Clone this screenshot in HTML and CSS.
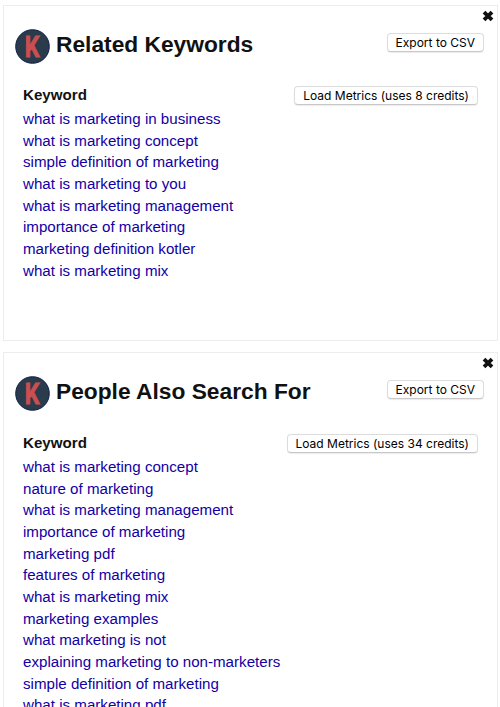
FILE: index.html
```html
<!DOCTYPE html>
<html lang="en">
<head>
  <meta charset="UTF-8">
  <title>Related Keywords</title>
  <link rel="stylesheet" href="styles.css">
</head>
<body>

  <section class="panel" id="related">
    <button class="close" title="Close">
      <svg width="12" height="12" viewBox="0 0 12 12"><path d="M2 2.2L10 9.8M10 2.2L2 9.8"/></svg>
    </button>
    <header class="panel-header">
      <svg class="logo" viewBox="0 0 35 35">
        <circle cx="17.5" cy="17.5" r="16.8"/>
        <text transform="translate(17 27.8) scale(0.8 1)">K</text>
      </svg>
      <h2>Related Keywords</h2>
      <button class="btn">Export to CSV</button>
    </header>
    <div class="list-header">
      <h3>Keyword</h3>
      <button class="btn">Load Metrics (uses 8 credits)</button>
    </div>
    <ul>
      <li><a href="#">what is marketing in business</a></li>
      <li><a href="#">what is marketing concept</a></li>
      <li><a href="#">simple definition of marketing</a></li>
      <li><a href="#">what is marketing to you</a></li>
      <li><a href="#">what is marketing management</a></li>
      <li><a href="#">importance of marketing</a></li>
      <li><a href="#">marketing definition kotler</a></li>
      <li><a href="#">what is marketing mix</a></li>
    </ul>
  </section>

  <section class="panel" id="people-also">
    <button class="close" title="Close">
      <svg width="12" height="12" viewBox="0 0 12 12"><path d="M2 2.2L10 9.8M10 2.2L2 9.8"/></svg>
    </button>
    <header class="panel-header">
      <svg class="logo" viewBox="0 0 35 35">
        <circle cx="17.5" cy="17.5" r="16.8"/>
        <text transform="translate(17 27.8) scale(0.8 1)">K</text>
      </svg>
      <h2>People Also Search For</h2>
      <button class="btn">Export to CSV</button>
    </header>
    <div class="list-header">
      <h3>Keyword</h3>
      <button class="btn">Load Metrics (uses 34 credits)</button>
    </div>
    <ul>
      <li><a href="#">what is marketing concept</a></li>
      <li><a href="#">nature of marketing</a></li>
      <li><a href="#">what is marketing management</a></li>
      <li><a href="#">importance of marketing</a></li>
      <li><a href="#">marketing pdf</a></li>
      <li><a href="#">features of marketing</a></li>
      <li><a href="#">what is marketing mix</a></li>
      <li><a href="#">marketing examples</a></li>
      <li><a href="#">what marketing is not</a></li>
      <li><a href="#">explaining marketing to non-marketers</a></li>
      <li><a href="#">simple definition of marketing</a></li>
      <li><a href="#">what is marketing pdf</a></li>
    </ul>
  </section>

</body>
</html>
```
FILE: styles.css
```css
* {
  margin: 0;
  padding: 0;
  box-sizing: border-box;
}

body {
  height: 707px;
  padding: 5px 2px 0 3px;
  overflow: hidden;
  background-color: #fff;
  color: #111;
  font-family: Arial, "Liberation Sans", sans-serif;
  font-size: 15.13px;
}

/* Panels */
.panel {
  position: relative;
  min-height: 336px;
  margin-bottom: 11px;
  padding: 22px 13px 0 11px;
  border: 1px solid #ededed;
}

.panel-header {
  display: flex;
  align-items: center;
  height: 36px;
}

.logo {
  width: 35px;
  height: 35px;
}

.logo circle {
  fill: #2a3b4c;
  stroke: #13204a;
  stroke-width: 1;
}

.logo text {
  fill: #c94f50;
  stroke: #c94f50;
  stroke-width: 0.9;
  font-family: Roboto, sans-serif;
  font-size: 29px;
  font-weight: bold;
  text-anchor: middle;
}

h2 {
  flex: 1;
  padding: 0 0 4px 6px;
  font-size: 22.75px;
  line-height: 26px;
}

/* Buttons */
.btn {
  height: 19px;
  padding: 0 8px;
  border: 1px solid #dcdcdc;
  border-bottom-color: #c8c8c8;
  border-radius: 4px;
  background-color: #fff;
  box-shadow: 0 1px 1px rgba(0,0,0,0.08);
  color: #000;
  font-family: Inter, sans-serif;
  font-size: 12px;
  line-height: 17px;
}

.panel-header .btn {
  margin-bottom: 7px;
}

.close {
  position: absolute;
  top: 4px;
  right: 3px;
  width: 12px;
  height: 12px;
  border: none;
  background: none;
}

.close svg {
  display: block;
}

.close path {
  stroke: #111;
  stroke-width: 3.8;
}

/* Keyword list */
.list-header {
  display: flex;
  justify-content: space-between;
  height: 23px;
  margin-top: 21px;
  padding: 0 6px 0 8px;
}

.list-header .btn {
  margin-top: 1px;
}

#people-also .list-header {
  margin-top: 22px;
}

h3 {
  font-size: 15.13px;
  line-height: 20px;
}

ul {
  padding-left: 8px;
  list-style: none;
}

li {
  height: 21.66px;
  line-height: 21.66px;
}

a {
  color: #1200a4;
  text-decoration: none;
}
```
